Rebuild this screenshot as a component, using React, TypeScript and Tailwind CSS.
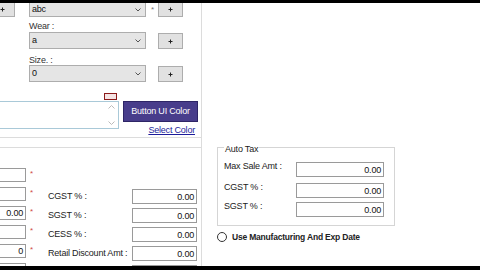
import React from 'react'
import { twMerge } from 'tailwind-merge'
import clsx, { type ClassValue } from 'clsx'

function cn(...inputs: ClassValue[]) {
  return twMerge(clsx(inputs))
}

function PlusButton({ className }: { className?: string }) {
  return (
    <div className={cn('flex items-center justify-center w-[25px] bg-[#e1e1e1] border border-[#adadad]', className)}>
      <svg width="5" height="5" viewBox="0 0 5 5">
        <path d="M2.5 0.5v4M0.5 2.5h4" stroke="#222" strokeWidth="1" />
      </svg>
    </div>
  )
}

function Combo({ value, className }: { value: string; className?: string }) {
  return (
    <div className={cn('flex items-center justify-between w-[117px] bg-[#e5e5e5] border border-[#adadad] pl-[2px] pr-[4px]', className)}>
      <span className="text-[#111]">{value}</span>
      <svg width="6" height="4" viewBox="0 0 6 4">
        <path d="M0.5 0.5L3 3L5.5 0.5" fill="none" stroke="#555" strokeWidth="1" />
      </svg>
    </div>
  )
}

function Field({ value, className }: { value?: string; className?: string }) {
  return (
    <div className={cn('flex items-end justify-end bg-white border border-[#9a9a9a] pr-[2px] pb-[1px] text-[#111]', className)}>
      {value}
    </div>
  )
}

function Star() {
  return <span className="ml-[4px] mt-[2px] text-[8px] leading-none text-[#d04848]">*</span>
}

const leftRows = ['', '', '0.00', '', '0', '0.00']

const taxRows = [
  { label: 'CGST % :', value: '0.00' },
  { label: 'SGST % :', value: '0.00' },
  { label: 'CESS % :', value: '0.00' },
  { label: 'Retail Discount Amt :', value: '0.00' },
  { label: '', value: '' },
]

const autoRows = [
  { label: 'Max Sale Amt :', mt: 'mt-[8px]' },
  { label: 'CGST % :', mt: 'mt-[6px]' },
  { label: 'SGST % :', mt: 'mt-[4px]' },
]

export default function App() {
  return (
    <div className="w-[480px] h-[270px] bg-white flex flex-col overflow-hidden font-['Liberation_Sans',Arial,sans-serif] text-[9px] leading-none tracking-[-0.2px] text-[#333]">
      <div className="h-[3px] bg-black shrink-0" />

      <div className="flex-1 flex overflow-hidden">
        {/* left column */}
        <div className="w-[202px] shrink-0 border-r border-[#dcdcdc] flex flex-col">
          <div className="h-[135px] shrink-0 border-b border-[#dcdcdc] flex flex-col">
            <div className="flex items-start">
              <PlusButton className="ml-[-10px] h-[14px] border-t-0" />
              <Combo value="abc" className="ml-[14px] h-[14px] border-t-0" />
              <span className="w-[12px] pl-[5px] pt-[3px] text-[8px] text-[#777]">*</span>
              <PlusButton className="h-[14px] border-t-0" />
            </div>

            <div className="mt-[5px] ml-[29px] h-[9px]">Wear :</div>
            <div className="mt-[1px] flex items-end">
              <Combo value="a" className="ml-[29px] h-[17px]" />
              <PlusButton className="ml-[12px] h-[16px]" />
            </div>

            <div className="mt-[7px] ml-[29px] h-[9px]">Size. :</div>
            <div className="flex items-end">
              <Combo value="0" className="ml-[29px] h-[17px]" />
              <PlusButton className="ml-[12px] h-[16px]" />
            </div>

            <div className="mt-[11px] ml-[104px] w-[13px] h-[7px] border border-[#8b1a1a] bg-[#f5e4e4]" />

            <div className="mt-[1px] flex items-start">
              <div className="ml-[-2px] w-[121px] h-[28px] border border-[#a9c9d8] bg-white flex justify-end pr-[2px]">
                <div className="w-[9px] flex flex-col items-center justify-between py-[3px]">
                  <svg width="7" height="4" viewBox="0 0 7 4">
                    <path d="M0.5 3.5L3.5 0.5L6.5 3.5" fill="none" stroke="#bbb" strokeWidth="1" />
                  </svg>
                  <svg width="7" height="4" viewBox="0 0 7 4">
                    <path d="M0.5 0.5L3.5 3.5L6.5 0.5" fill="none" stroke="#bbb" strokeWidth="1" />
                  </svg>
                </div>
              </div>
              <div className="ml-[4px] flex flex-col items-end">
                <button className="w-[75px] h-[21px] bg-[#483d8b] border border-[#2e2566] text-white text-[9px] leading-none">
                  Button UI Color
                </button>
                <span className="mt-[4px] mr-[3px] text-[#1c1c9a] underline">Select Color</span>
              </div>
            </div>
          </div>

          <div className="h-[9px] shrink-0" />

          <div className="flex-1 border-t border-[#dcdcdc] flex">
            <div className="w-[48px] shrink-0 pt-[20px] flex flex-col gap-[5px]">
              {leftRows.map((v, i) => (
                <div key={i} className="flex items-start">
                  <Field value={v} className="ml-[-10px] w-[36px] h-[14px]" />
                  <Star />
                </div>
              ))}
            </div>
            <div className="pt-[41px] flex flex-col gap-[4px]">
              {taxRows.map((r, i) => (
                <div key={i} className="flex items-center">
                  <span className="w-[84px] text-[#222]">{r.label}</span>
                  <Field value={r.value} className="w-[65px] h-[15px]" />
                </div>
              ))}
            </div>
          </div>
        </div>

        {/* right area */}
        <div className="flex-1 flex flex-col">
          <div className="mt-[144px] ml-[15px] w-[178px] border border-[#d5d5d5] flex flex-col pb-[8px]">
            <span className="mt-[-3px] ml-[6px] self-start px-[1px] bg-white h-[9px] text-[#222]">Auto Tax</span>
            {autoRows.map((r, i) => (
              <div key={i} className={cn('flex items-start pl-[6px]', r.mt)}>
                <span className="w-[72px] text-[#222]">{r.label}</span>
                <Field value="0.00" className="w-[88px] h-[15px]" />
              </div>
            ))}
          </div>
          <div className="mt-[6px] ml-[15px] flex items-center">
            <div className="w-[10px] h-[10px] rounded-full border border-[#333] bg-white" />
            <span className="ml-[5px] font-bold text-[8.5px] text-[#222]">Use Manufacturing And Exp Date</span>
          </div>
        </div>
      </div>

      <div className="h-[4px] bg-black shrink-0" />
    </div>
  )
}
